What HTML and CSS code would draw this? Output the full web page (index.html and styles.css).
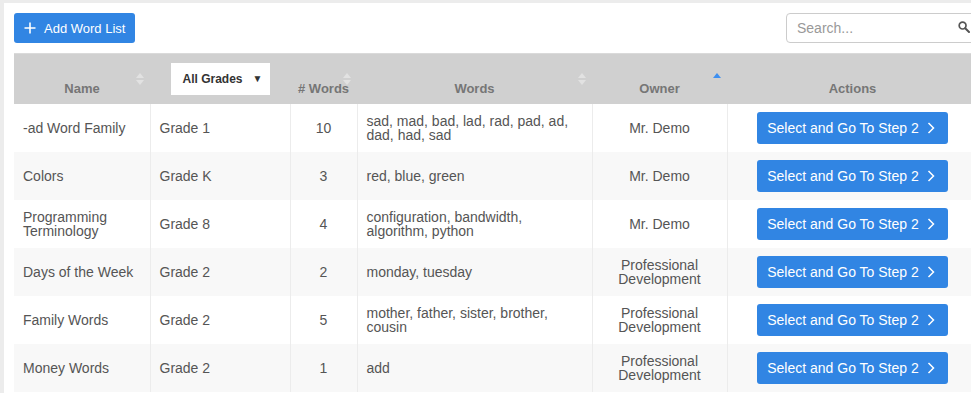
FILE: index.html
```html
<!DOCTYPE html>
<html lang="en">
<head>
<meta charset="utf-8">
<title>Word Lists</title>
<link rel="stylesheet" href="styles.css">
</head>
<body>
<div class="panel">
  <div class="toolbar">
    <button class="btn add-btn" type="button">
      <svg class="plus" width="12" height="12" viewBox="0 0 12 12"><path d="M6 0.5V11.5M0.5 6H11.5" stroke="#fff" stroke-width="1.6" fill="none"/></svg>
      <span>Add Word List</span>
    </button>
    <div class="search">
      <input class="search-input" type="text" placeholder="Search...">
      <svg class="search-icon" width="12" height="12" viewBox="0 0 12 12"><circle cx="4.6" cy="4.6" r="3.4" stroke="#555" stroke-width="1.7" fill="none"/><path d="M7.2 7.2L11 11" stroke="#555" stroke-width="2" stroke-linecap="round"/></svg>
    </div>
  </div>
  <table class="grid">
    <colgroup>
      <col class="c-name"><col class="c-grade"><col class="c-count"><col class="c-words"><col class="c-owner"><col class="c-actions">
    </colgroup>
    <thead>
      <tr>
        <th class="sortable">Name<span class="sort"><i class="up"></i><i class="down"></i></span></th>
        <th class="filter-th"><div class="select"><span>All Grades</span><span class="caret">&#9660;</span></div></th>
        <th class="sortable">#&nbsp;Words<span class="sort"><i class="up"></i><i class="down"></i></span></th>
        <th class="sortable">Words<span class="sort"><i class="up"></i><i class="down"></i></span></th>
        <th class="sortable">Owner<span class="sort active"><i class="up"></i></span></th>
        <th>Actions</th>
      </tr>
    </thead>
    <tbody>
      <tr>
        <td>-ad Word Family</td><td>Grade 1</td><td class="num">10</td><td>sad, mad, bad, lad, rad, pad, ad, dad, had, sad</td><td class="owner">Mr. Demo</td>
        <td class="act"><button class="btn go-btn" type="button">Select and Go To Step 2<svg class="chev" width="8" height="12" viewBox="0 0 8 12"><path d="M1.5 1L6.5 6L1.5 11" stroke="#fff" stroke-width="1.5" fill="none"/></svg></button></td>
      </tr>
      <tr>
        <td>Colors</td><td>Grade K</td><td class="num">3</td><td>red, blue, green</td><td class="owner">Mr. Demo</td>
        <td class="act"><button class="btn go-btn" type="button">Select and Go To Step 2<svg class="chev" width="8" height="12" viewBox="0 0 8 12"><path d="M1.5 1L6.5 6L1.5 11" stroke="#fff" stroke-width="1.5" fill="none"/></svg></button></td>
      </tr>
      <tr>
        <td>Programming Terminology</td><td>Grade 8</td><td class="num">4</td><td>configuration, bandwidth, algorithm, python</td><td class="owner">Mr. Demo</td>
        <td class="act"><button class="btn go-btn" type="button">Select and Go To Step 2<svg class="chev" width="8" height="12" viewBox="0 0 8 12"><path d="M1.5 1L6.5 6L1.5 11" stroke="#fff" stroke-width="1.5" fill="none"/></svg></button></td>
      </tr>
      <tr>
        <td>Days of the Week</td><td>Grade 2</td><td class="num">2</td><td>monday, tuesday</td><td class="owner">Professional Development</td>
        <td class="act"><button class="btn go-btn" type="button">Select and Go To Step 2<svg class="chev" width="8" height="12" viewBox="0 0 8 12"><path d="M1.5 1L6.5 6L1.5 11" stroke="#fff" stroke-width="1.5" fill="none"/></svg></button></td>
      </tr>
      <tr>
        <td>Family Words</td><td>Grade 2</td><td class="num">5</td><td>mother, father, sister, brother, cousin</td><td class="owner">Professional Development</td>
        <td class="act"><button class="btn go-btn" type="button">Select and Go To Step 2<svg class="chev" width="8" height="12" viewBox="0 0 8 12"><path d="M1.5 1L6.5 6L1.5 11" stroke="#fff" stroke-width="1.5" fill="none"/></svg></button></td>
      </tr>
      <tr>
        <td>Money Words</td><td>Grade 2</td><td class="num">1</td><td>add</td><td class="owner">Professional Development</td>
        <td class="act"><button class="btn go-btn" type="button">Select and Go To Step 2<svg class="chev" width="8" height="12" viewBox="0 0 8 12"><path d="M1.5 1L6.5 6L1.5 11" stroke="#fff" stroke-width="1.5" fill="none"/></svg></button></td>
      </tr>
    </tbody>
  </table>
</div>
</body>
</html>
```

FILE: styles.css
```css
html, body {
  margin: 0;
  padding: 0;
  overflow: hidden;
  background: #ececec;
  font-family: "Liberation Sans", Arial, sans-serif;
}

.panel {
  box-sizing: border-box;
  width: 984px;
  margin: 3px 0 0 4px;
  padding: 10px 10px 0 10px;
  background: #fff;
  min-height: 400px;
}

.toolbar {
  display: flex;
  justify-content: space-between;
  align-items: center;
  height: 30px;
  margin-bottom: 10px;
}

.btn {
  border: 0;
  margin: 0;
  background: #3185e3;
  color: #fff;
  font-family: inherit;
  cursor: pointer;
  display: inline-flex;
  align-items: center;
  box-sizing: border-box;
}

.add-btn {
  height: 30px;
  width: 121px;
  padding: 0 0 0 10px;
  border-radius: 3px;
  font-size: 13px;
}

.add-btn .plus {
  margin-right: 8px;
}

.search {
  position: relative;
  width: 192px;
  height: 30px;
}

.search-input {
  box-sizing: border-box;
  width: 100%;
  height: 30px;
  border: 1px solid #ccc;
  border-radius: 4px;
  padding: 0 26px 0 10px;
  font-family: inherit;
  font-size: 14px;
  color: #555;
  outline: none;
}

.search-input::placeholder {
  color: #999;
}

.search-icon {
  position: absolute;
  right: 8px;
  top: 8px;
}

.grid {
  width: 964px;
  table-layout: fixed;
  border-collapse: collapse;
  border-spacing: 0;
}

.c-name { width: 136px; }
.c-grade { width: 140px; }
.c-count { width: 67px; }
.c-words { width: 235px; }
.c-owner { width: 135px; }
.c-actions { width: 251px; }

.grid thead tr {
  background: #d0d0d0;
  height: 50px;
}

.grid th {
  position: relative;
  border-top: 1px solid #dadada;
  padding: 0 8px 7px;
  vertical-align: bottom;
  text-align: center;
  font-size: 13px;
  line-height: 16px;
  font-weight: bold;
  color: #767676;
  white-space: nowrap;
}

.grid th.filter-th {
  vertical-align: top;
  padding: 9px 0 0;
}

.select {
  display: flex;
  align-items: center;
  justify-content: space-between;
  box-sizing: border-box;
  width: 99px;
  height: 32px;
  margin: 0 auto;
  padding: 0 7px 0 12px;
  background: #fff;
  color: #333;
  font-size: 12px;
  font-weight: bold;
}

.caret {
  font-size: 10px;
  color: #333;
}

.sort {
  position: absolute;
  right: 6px;
  top: 19px;
  display: flex;
  flex-direction: column;
  gap: 2px;
}

.sort i {
  display: block;
  width: 0;
  height: 0;
  border-left: 4px solid transparent;
  border-right: 4px solid transparent;
}

.sort .up {
  border-bottom: 5px solid #e2e2e2;
}

.sort .down {
  border-top: 5px solid #e2e2e2;
}

.sort.active .up {
  border-bottom-color: #3d8ff0;
}

.grid td {
  height: 48px;
  box-sizing: border-box;
  padding: 0 9px;
  vertical-align: middle;
  font-size: 14px;
  line-height: 14px;
  color: #555;
  border-left: 1px solid #ececec;
}

.grid td:first-child {
  border-left: 0;
}

.grid tbody tr:nth-child(even) {
  background: #f8f8f8;
}

.grid td.num,
.grid td.owner,
.grid td.act {
  text-align: center;
}

.go-btn {
  width: 191px;
  height: 32px;
  padding: 0 0 0 10px;
  border-radius: 3px;
  font-size: 14px;
  vertical-align: middle;
}

.go-btn .chev {
  margin-left: 8px;
}
```
